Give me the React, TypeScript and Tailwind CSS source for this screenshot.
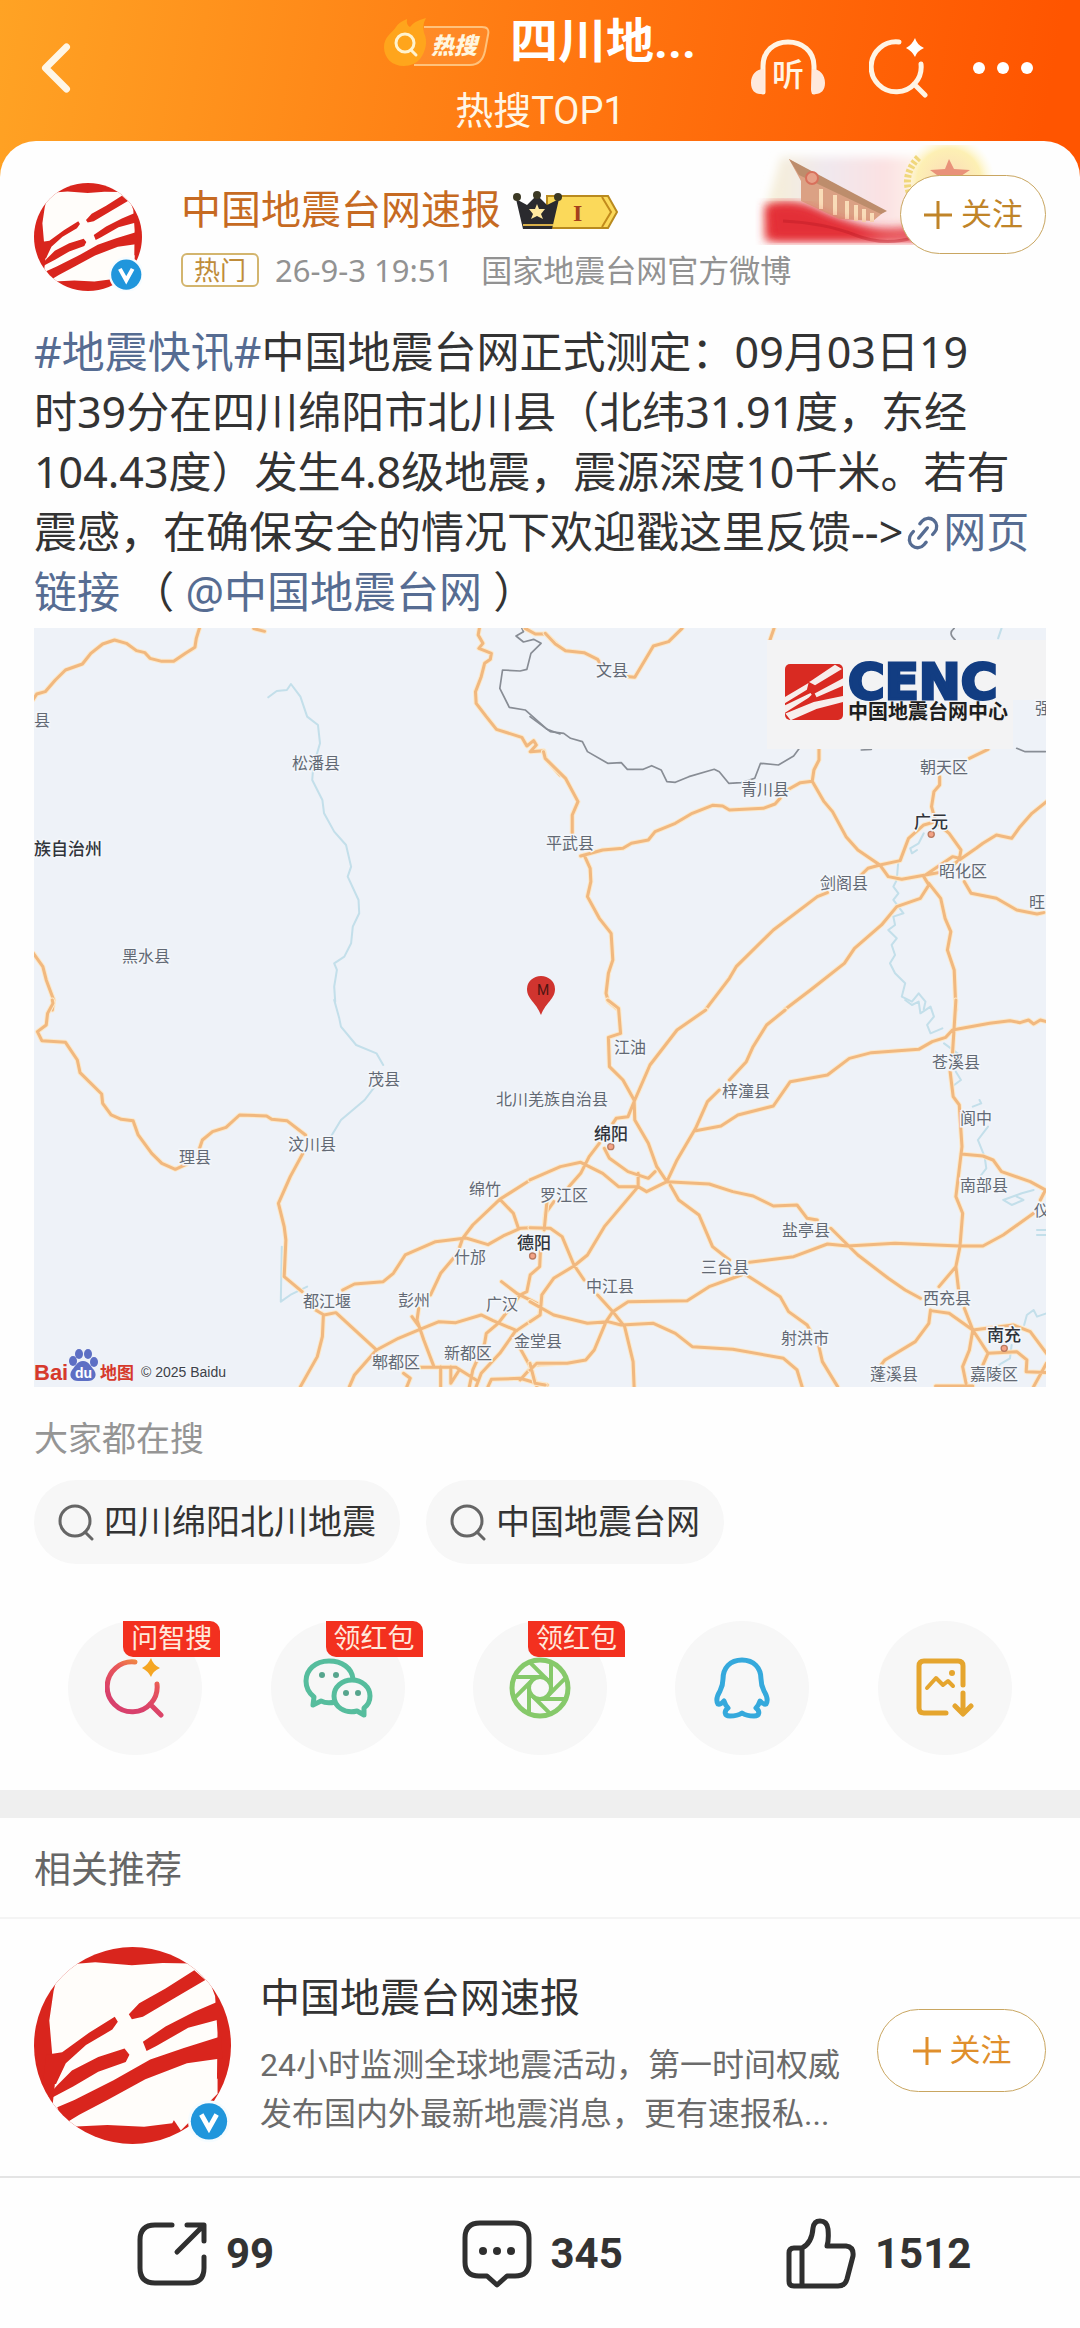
import clsx from 'clsx';
import { ChevronLeft, Link2 } from 'lucide-react';

type MapLabel = { text: string; x: number; y: number; city?: boolean };

type MapTileData = {
  offset: string;
  roads: string;
  borders: string;
  rivers: string;
  dots: [number, number][];
};

const TILES: MapTileData[] = [
  {
    offset: 'translate(-4 -8)',
    roads:
      'M10 238L20 222 45 215 75 180 105 150 155 132 180 100 215 72 250 60 285 70 315 92 340 98 355 115 390 124 425 124 460 100 488 82 492 55 502 22M662 26L694 34M1330 22L1326 45 1340 70 1328 85 1345 92 1365 100 1362 118 1345 130 1335 170 1318 215 1320 250 1350 290 1380 328 1455 352 1470 378 1490 362 1498 375 1480 395 1520 392 1525 415 1568 465M10 1000L38 1040 48 1080 70 1140 66 1170M1465 25L1495 42 1525 42 1545 60 1568 82',
    borders:
      'M1455 24L1460 35 1438 48 1460 66 1490 58 1512 70 1482 100 1470 148 1450 153 1398 150 1390 205 1418 262 1465 270 1530 328 1568 342',
    rivers:
      'M705 232L730 213 760 210 772 192 800 230 820 290 852 315 858 370 838 440 835 480 865 540 870 580 900 635 935 675 950 740 940 770 972 840 974 880 955 920 950 970 930 1010 900 1030 908 1050 900 1100 903 1145',
    dots: [],
  },
  {
    offset: 'translate(496 -8)',
    roads:
      'M45 40L75 72 105 92 160 98 200 118 210 135M270 168L310 172 365 78 410 65 450 25M722 25L710 60M40 395L45 415 105 475 142 545 125 585 125 640M160 705L178 745 180 785 170 830 205 895 240 940 245 1020 232 1060 225 1120 232 1145 262 1170M150 708L215 690 275 685 300 670 350 660 370 635 430 610 480 580 540 556 570 558 590 570 690 565 725 552 740 535M765 508L800 488 835 484 840 450 855 420 855 385M835 484L870 545 895 575 935 650 970 690 1035 735 1060 770 1100 778 1170 765 1250 710 1270 715M1035 735L1095 722 1120 655 1165 615 1200 605 1240 640 1275 690 1270 720 1225 755 1170 765M1035 735L1000 745 970 775M880 818L850 830 720 930 700 950 610 1040 590 1075 520 1168M1270 720L1320 685 1340 670 1380 645 1425 655 1450 620 1485 580 1528 545M1200 605L1188 560 1195 515 1212 495 1212 470M1300 415L1355 388M1165 770L1180 795 1155 835 1085 860 1040 915 960 985 930 1030 830 1110 755 1168M1180 790L1215 835 1228 895 1245 935 1235 990 1255 1050 1260 1170M1285 785L1305 820 1380 835 1440 870 1500 882 1520 878',
    borders:
      'M0 290L60 335 100 340 120 355 155 365 170 395 230 430 270 428 288 448 335 448 360 437 388 450 405 485 430 487 470 470 545 448 560 455 588 490 625 488 665 475 682 430 735 435 780 408 797 385M1255 25Q1235 40 1258 60M980 390L1010 388M1440 385L1465 395 1525 395',
    rivers:
      'M1165 640L1150 670 1125 685 1130 700 1145 690M1090 720L1085 780 1075 800 1090 820 1075 840 1105 880 1075 890 1080 915 1060 930 1085 955 1070 975 1080 1005 1065 1030 1080 1060 1110 1090 1100 1130 1130 1145 1150 1120 1170 1145 1165 1168M1395 25L1385 55',
    dots: [[1187, 643]],
  },
  {
    offset: 'translate(-4 372)',
    roads:
      'M66 0L68 10 52 40 48 75 22 95 35 122 105 127 140 180 148 218 212 282 215 310 240 345 270 358 305 362 320 405 360 460 390 490 430 508 465 492M500 450L510 420 540 395 580 382 620 345 700 348 715 358 760 362 815 405M810 455L770 530 735 610 752 680 757 720 752 830 805 875M845 930L870 945 905 938 1025 1050M868 945L865 1010 850 1070 800 1160M925 870L960 852 1045 845 1075 820 1110 765 1200 725 1290 714 1355 734 1400 708 1450 685 1480 683M1480 540L1390 598 1310 675 1280 715 1265 760 1215 820 1185 885M1150 925L1145 960 1165 1020 1195 1100M1130 950L1155 985M1390 598L1430 640 1445 685M1550 605L1525 640 1520 690M945 1160L960 1125 1025 1050 1090 1015 1150 990 1210 965 1260 968 1335 945 1370 962 1440 992M1395 845L1440 880 1500 910M1510 755L1508 800 1480 825 1470 875 1450 885 1385 970 1350 1000 1345 1030 1310 1110 1300 1160M1515 885L1508 945 1435 995 1390 1060 1335 1120 1320 1160M1450 1045L1480 1100 1500 1160M1450 1140L1490 1095 1568 1090M1355 1160L1365 1138 1450 1135 1500 1150 1530 1155M1155 1102L1260 1102 1320 1140M1105 1120L1125 1135 1115 1160M1215 1100V1160M1245 1100V1150L1270 1110',
    borders: '',
    rivers:
      'M745 740L742 905 770 885 820 860M900 0L915 55 920 80 965 135 1025 160 1045 195M1020 260L990 300 920 360 890 410',
    dots: [[1487, 768]],
  },
  {
    offset: 'translate(496 372)',
    roads:
      'M230 0L262 25 268 100 232 112 235 200 275 240 308 300 310 360 350 430 375 500 405 545M245 370L255 355 290 350 310 300 355 195 435 90 520 30M755 30L700 75 660 140 640 185 590 240M560 270L525 305 490 385 435 480 405 545 345 575 320 560 262 560 215 520 150 487 90 500 0 540M490 392L565 378 615 345 720 318 770 245 880 225 945 175 1010 158 1150 148 1190 125 1230 112 1250 90 1360 70 1420 62 1450 68 1475 60 1490 72 1510 60 1528 65M1260 0L1250 160M1243 215L1252 290 1270 315 1278 440 1260 590 1280 640 1272 740 1260 800 1268 870M1285 925L1310 990 1355 1060 1340 1095M1275 462L1340 468 1370 480 1395 515 1480 545 1525 570 1510 600M405 545L530 552 600 575 660 588 720 618 790 615 820 655 850 660M890 685L940 735 970 765 1060 835 1110 870 1155 895M650 787L780 770 880 732 940 738 1080 730 1270 738 1340 738 1400 705 1490 640M415 555L440 600 500 645 540 740 590 780M625 825L530 860 465 902 290 905 245 935 225 965 190 1050 165 1080 110 1090 20 1090 0 1110M640 825L740 890 765 935 820 975 828 990M855 1040L865 1085 910 1160M320 520L320 560 220 680 170 765 130 798 70 835 35 885 30 945 0 965M50 605L42 690M0 683L60 685 95 710 130 795 160 840M200 885L245 935 280 980 305 1085 308 1160M0 905L70 945 170 970 230 965 270 975 365 970 430 1000 480 1040 600 1048 750 1075 790 1110 805 1160M205 430L175 470 150 520 115 560M220 445L235 475 290 515 350 535 370 515M1260 800L1210 860M1185 930L1180 970 1140 1025 1050 1080 1035 1100M1185 932L1240 940 1310 990 1300 1050 1280 1100 1290 1150M1310 990L1430 975 1480 995 1528 1060M1355 1060L1440 1055 1470 1080 1468 1115 1528 1118M1528 1090L1490 1160M1200 1158L1310 1158M0 1090L15 1150 45 1155',
    borders: '',
    rivers:
      'M1110 0L1130 15 1150 5 1155 40 1185 20 1195 50 1175 75 1185 100 1220 85M1225 130L1265 160M1260 215L1275 240 1255 255M1310 320L1335 310 1330 300M1355 380L1325 420 1345 470 1350 505 1335 525M1490 570L1455 580 1400 600 1425 615 1460 600 1440 590M1500 690H1528M1500 705H1528M1528 940L1500 950 1490 930 1470 945 1462 975M1425 1035L1420 1075 1395 1090 1375 1105',
    dots: [
      [239, 440],
      [1403, 1045],
    ],
  },
];

const LABELS: MapLabel[] = [
  { text: '县', x: 0, y: 92 },
  { text: '松潘县', x: 258, y: 135 },
  { text: '族自治州', x: 0, y: 221, city: true },
  { text: '黑水县', x: 88, y: 328 },
  { text: '文县', x: 562, y: 42 },
  { text: '青川县', x: 707, y: 161 },
  { text: '朝天区', x: 886, y: 139 },
  { text: '广元', x: 880, y: 194, city: true },
  { text: '平武县', x: 512, y: 215 },
  { text: '昭化区', x: 905, y: 243 },
  { text: '剑阁县', x: 786, y: 255 },
  { text: '旺', x: 995, y: 274 },
  { text: '强', x: 1001, y: 80 },
  { text: '茂县', x: 334, y: 451 },
  { text: '汶川县', x: 254, y: 516 },
  { text: '理县', x: 145, y: 529 },
  { text: '北川羌族自治县', x: 462, y: 471 },
  { text: '绵竹', x: 435, y: 561 },
  { text: '什邡', x: 420, y: 629 },
  { text: '德阳', x: 483, y: 615, city: true },
  { text: '都江堰', x: 269, y: 673 },
  { text: '彭州', x: 364, y: 672 },
  { text: '广汉', x: 452, y: 676 },
  { text: '新都区', x: 410, y: 725 },
  { text: '郫都区', x: 338, y: 734 },
  { text: '金堂县', x: 480, y: 713 },
  { text: '江油', x: 580, y: 419 },
  { text: '绵阳', x: 560, y: 506, city: true },
  { text: '梓潼县', x: 688, y: 463 },
  { text: '罗江区', x: 506, y: 567 },
  { text: '苍溪县', x: 898, y: 434 },
  { text: '阆中', x: 926, y: 490 },
  { text: '南部县', x: 926, y: 557 },
  { text: '仪', x: 1000, y: 582 },
  { text: '盐亭县', x: 748, y: 602 },
  { text: '三台县', x: 667, y: 639 },
  { text: '中江县', x: 552, y: 658 },
  { text: '西充县', x: 889, y: 670 },
  { text: '射洪市', x: 747, y: 710 },
  { text: '南充', x: 953, y: 707, city: true },
  { text: '蓬溪县', x: 836, y: 746 },
  { text: '嘉陵区', x: 936, y: 746 },
];

const HotSearchBadge = () => (
  <svg width="106" height="50" viewBox="0 0 106 50" aria-label="热搜">
    <path
      d="M40 10H98Q106 10 104 18L101 34Q98 48 86 48H30"
      fill="#ffffff"
      fillOpacity="0.08"
      stroke="#ffc27c"
      strokeWidth="2"
    />
    <path
      d="M0 30C0 20 8 16 12 10Q15 5 23 2Q22 8 26 10Q30 4 42 1Q38 8 40 16C44 24 42 34 36 42Q30 49 20 49C8 49 0 41 0 30Z"
      fill="#ffa51c"
    />
    <circle cx="21" cy="26" r="9" fill="none" stroke="#fff3cf" strokeWidth="3" />
    <path d="M27 33L32 38" stroke="#fff3cf" strokeWidth="3" strokeLinecap="round" />
    <text x="47" y="37" fontSize="23" fontWeight="900" fontStyle="italic" fill="#fff6df">
      热搜
    </text>
  </svg>
);

const ListenIcon = () => (
  <svg width="74" height="58" viewBox="0 0 74 58" fill="none">
    <path
      d="M12 53V27C12 12 23 3 37 3S63 12 63 27V53"
      stroke="#fff4e4"
      strokeWidth="5"
      strokeLinecap="round"
    />
    <path d="M13 30C5 30 0 36 0 44C0 51 4 55 9 55C12 55 14 53 14 50ZM61 30C69 30 74 36 74 44C74 51 70 55 65 55C62 55 60 53 60 50Z" fill="#ffe9dc" />
    <text x="21" y="47" fontSize="32" fontWeight="500" fill="#fff4e4">
      听
    </text>
  </svg>
);

const SmartSearchIcon = ({ colorful }: { colorful?: boolean }) => (
  <svg width="60" height="62" viewBox="0 0 60 62" fill="none">
    <defs>
      <linearGradient id="smart-ring" x1="0.8" y1="0" x2="0.4" y2="0.8">
        <stop offset="0" stopColor="#f49a3c" />
        <stop offset="0.4" stopColor="#e8565a" />
        <stop offset="1" stopColor="#d8406c" />
      </linearGradient>
    </defs>
    <path
      d="M30 5A25 25 0 1 0 52 27M45 47L56 58"
      stroke={colorful ? 'url(#smart-ring)' : '#fff4e4'}
      strokeWidth="5"
      strokeLinecap="round"
    />
    <path
      d="M46 1Q48 8 55 11Q48 14 46 20Q43 14 37 11Q43 8 46 1Z"
      fill={colorful ? '#f5a623' : '#ffffff'}
    />
  </svg>
);

type AvatarProps = { className?: string; badge: 'small' | 'large' };

const CencAvatar = ({ className, badge }: AvatarProps) => (
  <svg viewBox="0 0 322 322" className={clsx('flex-none', className)} aria-label="中国地震台网速报">
    <defs>
      <clipPath id="avatar-round">
        <circle cx="161" cy="161" r="161" />
      </clipPath>
    </defs>
    <g clipPath="url(#avatar-round)">
      <rect width="322" height="322" fill="#d9251d" />
      <path
        d="M60 28L100 25 160 30 210 26 258 27 284 48 296 80 300 140 299 222 240 262 226 288 180 294 120 291 60 294 30 262 34 225 30 178 25 120 32 72 40 40Z"
        fill="#fffdfa"
      />
      <path d="M220 270L300 215 300 240 240 300Z" fill="#fffdfa" />
      <path
        d="M155 110L172 92 215 68 262 38 280 54 232 82 178 114 160 118ZM178 155L215 130 262 106 304 88V118L252 132 200 162 184 170ZM20 176L46 172 90 140 132 114 137 122 128 135 85 160 52 190 36 224 14 226ZM22 244L38 226 62 202 105 180 148 166 156 176 150 188 105 204 64 228 30 246ZM38 262L66 250 130 218 190 184 245 165 306 146 308 182 250 190 182 216 120 250 74 274 48 290Z"
        fill="#d9251d"
      />
    </g>
    <g
      transform={badge === 'large' ? 'translate(275 273)' : 'translate(286 285) scale(0.66)'}
    >
      <circle r="52" fill="#f6fcff" />
      <circle r="45" fill="#2096dc" />
      <path d="M-19 -17L0 17 19 -17" fill="none" stroke="#ffffff" strokeWidth="12" />
    </g>
  </svg>
);

const CrownBadge = () => (
  <svg width="106" height="40" viewBox="0 0 106 40">
    <path d="M34 5H95L104 21 95 37H34Z" fill="#fbd95a" stroke="#b98a1e" strokeWidth="2" />
    <path d="M89 6L98 21 89 36" fill="none" stroke="#c18a1c" strokeWidth="2" />
    <text
      x="60"
      y="30"
      fontSize="24"
      fontWeight="700"
      fill="#a5401d"
      fontFamily="Liberation Serif, serif"
    >
      I
    </text>
    <path d="M3 8L14 14 24 4 34 14 46 8 39 38H10Z" fill="#2a2a2e" />
    <path d="M10 34H40" stroke="#d8b04a" strokeWidth="2" />
    <circle cx="4" cy="6" r="4" fill="#3c3924" />
    <circle cx="24" cy="4" r="4" fill="#3c3924" />
    <circle cx="45" cy="6" r="4" fill="#3c3924" />
    <path
      d="M24 13L26 18 32 18 28 23 30 28 24 25 18 28 20 23 16 18 22 18Z"
      fill="#ffe9a0"
    />
  </svg>
);

const HeaderBanner = () => (
  <svg
    width="246"
    height="110"
    viewBox="0 0 246 110"
    className="absolute right-[79px] top-[4px]"
    aria-hidden="true"
  >
    <defs>
      <filter id="soft-edge">
        <feGaussianBlur stdDeviation="5" />
      </filter>
      <linearGradient id="sky" x1="0" y1="0" x2="1" y2="0">
        <stop offset="0" stopColor="#f6efd6" />
        <stop offset="0.35" stopColor="#f0e8ee" />
        <stop offset="0.7" stopColor="#fbe1e2" />
        <stop offset="1" stopColor="#fffaf0" />
      </linearGradient>
      <radialGradient id="emblem">
        <stop offset="0" stopColor="#fbd9b8" />
        <stop offset="0.7" stopColor="#fdf0b4" />
        <stop offset="1" stopColor="#fffbe0" stopOpacity="0" />
      </radialGradient>
    </defs>
    <path d="M26 12H180V92H12V60Z" fill="url(#sky)" filter="url(#soft-edge)" />
    <circle cx="194" cy="36" r="46" fill="url(#emblem)" />
    <path d="M156 52Q146 30 164 12" fill="none" stroke="#f0d77c" strokeWidth="7" strokeDasharray="3 2" />
    <path d="M194 14L199 24 215 25 203 33 208 50H180L186 33 175 25 190 24Z" fill="#e9927a" />
    <path d="M10 60Q40 54 60 64T110 84T170 88V96H10Z" fill="#e8353a" filter="url(#soft-edge)" />
    <path d="M34 14L44 20 130 66 118 76 84 74 46 56 46 36Z" fill="#dba184" />
    <path d="M34 14L132 66 126 69 44 30Z" fill="#bd8d6c" />
    <path
      d="M66 44V64M80 50V70M92 56V74M101 60V76M109 64V77M117 68V77"
      stroke="#f9dcb8"
      strokeWidth="4"
    />
    <circle cx="57" cy="33" r="6" fill="#e7a088" stroke="#d8705c" strokeWidth="2" />
    <path d="M14 62Q40 56 60 66T112 82Q134 86 170 78V94H18Z" fill="#e22c34" fillOpacity="0.75" filter="url(#soft-edge)" />
    <path d="M28 76Q70 78 100 90T160 92" fill="none" stroke="#b81822" strokeWidth="3" strokeOpacity="0.4" />
  </svg>
);

const FollowButton = ({ className }: { className?: string }) => (
  <button
    type="button"
    className={clsx(
      'flex flex-none items-center justify-center gap-2 rounded-full border border-[#c9a661] bg-white text-[31px] leading-[40px]',
      className,
    )}
  >
    <svg width="30" height="30" viewBox="0 0 30 30">
      <path d="M15 1V29M1 15H29" stroke="currentColor" strokeWidth="3" />
    </svg>
    关注
  </button>
);

const MapTile = ({ tile }: { tile: MapTileData }) => (
  <g
    transform={`${tile.offset} scale(0.338 0.3333)`}
    fill="none"
    strokeLinejoin="round"
    strokeLinecap="round"
  >
    <path d={tile.rivers} stroke="#c3dfea" strokeWidth="6" />
    <path d={tile.borders} stroke="#888d95" strokeWidth="5" />
    <path d={tile.roads} stroke="#fce9cb" strokeWidth="15" />
    <path d={tile.roads} stroke="#f1b87f" strokeWidth="9" />
    {tile.dots.map(([cx, cy]) => (
      <circle key={cx} cx={cx} cy={cy} r="9" fill="#f3a285" stroke="#b9795f" strokeWidth="4" />
    ))}
  </g>
);

const EpicenterMap = () => (
  <svg viewBox="0 0 1012 759" className="mt-[6px] block h-auto w-full" aria-label="震中位置地图">
    <rect width="1012" height="759" fill="#eef2f8" />
    {TILES.map((tile) => (
      <MapTile key={tile.offset} tile={tile} />
    ))}
    <rect x="733" y="12" width="246" height="109" fill="#f3f3f4" />
    <rect x="979" y="12" width="33" height="60" fill="#f3f3f4" />
    {LABELS.map((label) => (
      <text
        key={label.text}
        x={label.x}
        y={label.y + 6}
        fontSize={label.city ? 17 : 16}
        fontWeight={label.city ? 500 : 400}
        fill={label.city ? '#30343b' : '#626974'}
        stroke="#f3f6fa"
        strokeWidth="3"
        paintOrder="stroke"
      >
        {label.text}
      </text>
    ))}

    {/* epicenter pin */}
    <path d="M507 387C502 374 493 371 493 361A14 13 0 0 1 521 361C521 371 512 374 507 387Z" fill="#d0342f" />
    <text x="503" y="367" fontSize="14" fill="#4d1512">
      M
    </text>

    {/* CENC logo */}
    <rect x="751" y="36" width="58" height="56" rx="5" fill="#d92a22" />
    <path
      d="M751 70L773 57 772 61 751 74ZM777 54L801 38 806 41 781 56ZM752 78L777 66 774 69 752 83ZM782 66L808 52V57L783 68ZM753 86L780 75 809 69V73L782 80 757 91Z"
      stroke="#f7eeec"
      strokeWidth="2"
      fill="#f7eeec"
    />
    <text
      x="814"
      y="71"
      fontSize="50"
      fontWeight="700"
      fontFamily="DejaVu Sans, sans-serif"
      fill="#123d82"
      stroke="#123d82"
      strokeWidth="3"
    >
      CENC
    </text>
    <text x="814" y="91" fontSize="20" fontWeight="700" fill="#1e1e20">
      中国地震台网中心
    </text>

    {/* Baidu map credit */}
    <text x="0" y="752" fontSize="22" fontWeight="700" fontFamily="Liberation Sans, sans-serif" fill="#d6392c">
      Bai
    </text>
    <g fill="#5d6fc4">
      <ellipse cx="39" cy="733" rx="4" ry="5" />
      <ellipse cx="45" cy="726" rx="4" ry="5" />
      <ellipse cx="54" cy="726" rx="4" ry="5" />
      <ellipse cx="60" cy="734" rx="4" ry="5" />
      <path d="M49 733C55 733 57 739 60 742C64 748 60 753 54 753H44C38 753 34 748 38 742C41 739 43 733 49 733Z" />
    </g>
    <text x="41" y="750" fontSize="14" fontWeight="700" fontFamily="Liberation Sans, sans-serif" fill="#ffffff">
      du
    </text>
    <text x="66" y="751" fontSize="17" fontWeight="700" fill="#d6392c">
      地图
    </text>
    <text
      x="107"
      y="749"
      fontSize="14"
      fontFamily="Liberation Sans, sans-serif"
      fill="#3c4149"
      stroke="#f3f6fa"
      strokeWidth="2"
      paintOrder="stroke"
    >
      © 2025 Baidu
    </text>
  </svg>
);

const SearchChip = ({ text }: { text: string }) => (
  <button
    type="button"
    className="flex h-[84px] items-center gap-[10px] rounded-full bg-[#f7f7f7] px-[24px] text-[34px] leading-[48px] text-[#333333]"
  >
    <svg width="36" height="38" viewBox="0 0 36 38" fill="none" stroke="#666666" strokeWidth="3">
      <circle cx="17" cy="18" r="15" />
      <path d="M27 29L34 36" strokeLinecap="round" />
    </svg>
    {text}
  </button>
);

const WechatIcon = () => (
  <svg width="70" height="60" viewBox="0 0 70 60" fill="none" stroke="#56bd9d" strokeWidth="5" strokeLinejoin="round">
    <path d="M50 21C49 10 39 3 26 3C12 3 3 12 3 23C3 30 6 35 11 39L10 47L18 43Q24 46 32 44" />
    <path d="M49 22C59 22 67 29 67 38C67 43 65 47 61 50V57L54 53C42 56 31 49 31 38C31 29 39 22 49 22Z" />
    <g fill="#56a58d" stroke="none">
      <circle cx="19" cy="17" r="3" />
      <circle cx="33" cy="17" r="3" />
      <circle cx="43" cy="35" r="3" />
      <circle cx="55" cy="35" r="3" />
    </g>
  </svg>
);

const MomentsIcon = () => (
  <svg width="62" height="62" viewBox="0 0 62 62" fill="none" stroke="#86c96a" strokeWidth="4">
    <circle cx="31" cy="31" r="28" strokeWidth="5" />
    <circle cx="31" cy="31" r="11" />
    {[0, 45, 90, 135, 180, 225, 270, 315].map((deg) => (
      <path key={deg} d="M20 31V56" transform={`rotate(${deg} 31 31)`} />
    ))}
  </svg>
);

const QqIcon = () => (
  <svg width="56" height="62" viewBox="0 0 56 62" fill="none" stroke="#35a9dc" strokeWidth="5" strokeLinejoin="round">
    <path d="M28 3C16 3 9 11 9 22C9 27 8 30 6 34C3 39 2 44 4 47C6 48 8 46 10 44C11 47 12 49 14 51C10 54 10 59 16 59C21 59 25 58 28 56C31 58 35 59 40 59C46 59 46 54 42 51C44 49 45 47 46 44C48 46 50 48 52 47C54 44 53 39 50 34C48 30 47 27 47 22C47 11 40 3 28 3Z" />
  </svg>
);

const SaveImageIcon = () => (
  <svg width="58" height="60" viewBox="0 0 58 60" fill="none" stroke="#e5a52e" strokeWidth="5" strokeLinecap="round" strokeLinejoin="round">
    <path d="M47 27V8Q47 3 42 3H8Q3 3 3 8V50Q3 55 8 55H30" />
    <path d="M11 30L20 20L27 27L32 23L37 28" strokeWidth="4" />
    <circle cx="36" cy="15" r="3" fill="#e5a52e" stroke="none" />
    <path d="M47 35V55M39 48L47 56L55 48" />
  </svg>
);

const ForwardIcon = () => (
  <svg width="70" height="66" viewBox="0 0 70 66" fill="none" stroke="#2f2f2f" strokeWidth="5" strokeLinecap="round" strokeLinejoin="round">
    <path d="M35 4H18Q3 4 3 19V47Q3 62 18 62H52Q67 62 67 47V36" />
    <path d="M40 31L66 5M50 4H67V20" />
  </svg>
);

const CommentIcon = () => (
  <svg width="70" height="68" viewBox="0 0 70 68" fill="none" stroke="#2f2f2f" strokeWidth="5" strokeLinejoin="round">
    <path d="M18 3H52Q67 3 67 18V42Q67 56 53 56H45L35 65L25 56H17Q3 56 3 42V18Q3 3 18 3Z" />
    <g fill="#2f2f2f" stroke="none">
      <circle cx="21" cy="31" r="4" />
      <circle cx="35" cy="31" r="4" />
      <circle cx="49" cy="31" r="4" />
    </g>
  </svg>
);

const LikeIcon = () => (
  <svg width="70" height="72" viewBox="0 0 70 72" fill="none" stroke="#2f2f2f" strokeWidth="5" strokeLinejoin="round">
    <path d="M16 30H8Q3 30 3 35V63Q3 68 8 68H52Q59 68 61 61L67 38Q68 29 60 28H41Q43 22 42 11Q41 3 34 3Q28 3 27 10Q26 25 16 30ZM16 30V68" />
  </svg>
);

const SHARE_TARGETS = [
  { name: '问智搜', badge: '问智搜', icon: <SmartSearchIcon colorful /> },
  { name: '微信', badge: '领红包', icon: <WechatIcon /> },
  { name: '朋友圈', badge: '领红包', icon: <MomentsIcon /> },
  { name: 'QQ', badge: null, icon: <QqIcon /> },
  { name: '保存图片', badge: null, icon: <SaveImageIcon /> },
];

const PageHeader = () => (
  <header className="grid grid-cols-[1fr_auto_1fr] bg-linear-[100deg,#ffa324_0%,#ff7a12_48%,#ff5500_96%] pb-[41px] text-[#fff6e6]">
    <button type="button" aria-label="返回" className="flex h-[136px] items-center justify-self-start pl-[14px]">
      <ChevronLeft size={84} strokeWidth={2} />
    </button>
    <div className="flex flex-col items-center gap-[15px] pt-[10px]">
      <div className="flex h-[64px] items-center gap-[20px]">
        <HotSearchBadge />
        <h1 className="text-[48px] leading-[64px] font-bold text-white">四川地...</h1>
      </div>
      <p className="text-[38px] leading-[44px]">热搜TOP1</p>
    </div>
    <div className="flex h-[136px] items-center justify-end gap-[44px] pr-[47px]">
      <button type="button" aria-label="听">
        <ListenIcon />
      </button>
      <button type="button" aria-label="智搜">
        <SmartSearchIcon />
      </button>
      <button type="button" aria-label="更多" className="flex gap-[12px]">
        <span className="size-3 rounded-full bg-white" />
        <span className="size-3 rounded-full bg-white" />
        <span className="size-3 rounded-full bg-white" />
      </button>
    </div>
  </header>
);

const PostHeader = () => (
  <div className="flex items-start">
    <CencAvatar className="size-[108px]" badge="large" />
    <div className="ml-[39px] flex flex-1 flex-col gap-[11px]">
      <div className="flex h-[56px] items-center gap-[12px]">
        <a href="#user" className="text-[40px] leading-[56px] text-[#c66a22]">
          中国地震台网速报
        </a>
        <CrownBadge />
      </div>
      <div className="flex h-[40px] items-center font-['Noto_Sans','Noto_Sans_CJK_SC',sans-serif] text-[31px] leading-[40px] text-[#929292]">
        <span className="flex h-[34px] items-center rounded-md border-2 border-[#d3b56e] px-[11px] text-[26px] leading-[30px] text-[#bf8c3a]">
          热门
        </span>
        <time className="ml-[16px]">26-9-3 19:51</time>
        <span className="ml-[28px]">国家地震台网官方微博</span>
      </div>
    </div>
  </div>
);

const PostBody = () => (
  <p className="mt-[31px] font-['Noto_Sans','Noto_Sans_CJK_SC',sans-serif] text-[43px] leading-[60px] text-[#333333]">
    <a href="#topic" className="text-[#566c92]">
      #地震快讯#
    </a>
    中国地震台网正式测定：09月03日19
    <br />
    时39分在四川绵阳市北川县（北纬31.91度，东经
    <br />
    104.43度）发生4.8级地震，震源深度10千米。若有
    <br />
    震感，在确保安全的情况下欢迎戳这里反馈--&gt;
    <a href="#link" className="text-[#566c92]">
      <Link2 size={40} strokeWidth={2} className="inline -rotate-50 align-[-5px]" />
      网页
      <br />
      链接
    </a>{' '}
    （{' '}
    <a href="#cenc" className="text-[#566c92]">
      @中国地震台网
    </a>{' '}
    ）
  </p>
);

const Recommendation = () => (
  <section>
    <h2 className="px-[34px] pt-[29px] pb-[23px] text-[37px] leading-[47px] text-[#666666]">相关推荐</h2>
    <div className="flex items-center border-t-2 border-[#f4f4f4] px-[34px] pt-[28px] pb-[32px]">
      <CencAvatar className="size-[197px]" badge="small" />
      <div className="ml-[29px] flex-1 pt-[18px]">
        <h3 className="text-[40px] leading-[56px] text-[#333333]">中国地震台网速报</h3>
        <p className="mt-[14px] text-[32px] leading-[49px] text-[#6b6b6b]">
          24小时监测全球地震活动，第一时间权威
          <br />
          发布国内外最新地震消息，更有速报私...
        </p>
      </div>
      <FollowButton className="mt-[10px] h-[83px] w-[169px] text-[#e08f2c]" />
    </div>
  </section>
);

const ActionBar = () => (
  <footer className="grid grid-cols-[1fr_1fr_294px] border-t-2 border-[#e4e4e4] pt-[37px] pb-[40px] pl-[137px] text-[42px] leading-[48px] font-bold text-[#333333]">
    <button type="button" aria-label="转发" className="flex h-[78px] items-center gap-[19px]">
      <ForwardIcon />
      99
    </button>
    <button type="button" aria-label="评论" className="flex h-[78px] items-center gap-[19px]">
      <CommentIcon />
      345
    </button>
    <button type="button" aria-label="点赞" className="flex h-[78px] items-center gap-[19px]">
      <LikeIcon />
      1512
    </button>
  </footer>
);

export default function App() {
  return (
    <div className="bg-[#fefefe] font-[Roboto,'Noto_Sans_CJK_SC',sans-serif]">
      <PageHeader />
      <main className="relative -mt-[36px] rounded-t-[36px] bg-[#fefefe]">
        <HeaderBanner />
        <FollowButton className="absolute top-[34px] right-[34px] h-[79px] w-[146px] text-[#c08428]" />
        <article className="px-[34px] pt-[42px]">
          <PostHeader />
          <PostBody />
          <EpicenterMap />
        </article>

        <section className="px-[34px] pt-[28px]">
          <h2 className="text-[34px] leading-[48px] text-[#959595]">大家都在搜</h2>
          <div className="mt-[17px] flex gap-[26px]">
            <SearchChip text="四川绵阳北川地震" />
            <SearchChip text="中国地震台网" />
          </div>
        </section>

        <div className="grid grid-cols-5 justify-items-center px-[34px] pt-[57px] pb-[35px]">
          {SHARE_TARGETS.map((target) => (
            <button
              key={target.name}
              type="button"
              aria-label={target.name}
              className="relative flex size-[134px] items-center justify-center rounded-full bg-[#f7f7f7]"
            >
              {target.icon}
              {target.badge !== null && (
                <span className="absolute top-0 left-[55px] flex h-[36px] w-[97px] items-center justify-center rounded-tr-[10px] rounded-bl-[10px] bg-[#f3301f] text-[27px] leading-[36px] whitespace-nowrap text-[#ffe9dc]">
                  {target.badge}
                </span>
              )}
            </button>
          ))}
        </div>

        <div className="h-[28px] bg-[#efefef]" />
        <Recommendation />
        <ActionBar />
      </main>
    </div>
  );
}
